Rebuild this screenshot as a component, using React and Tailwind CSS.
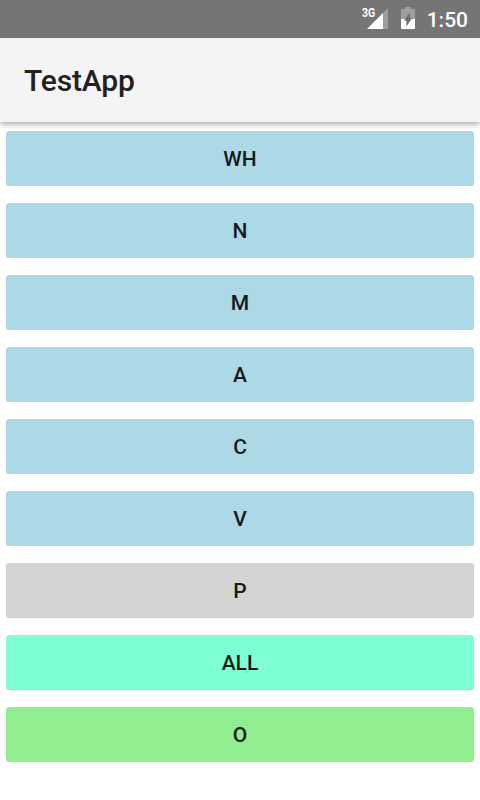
const buttons = [
  { label: "WH", color: "bg-[#add8e6]" },
  { label: "N", color: "bg-[#add8e6]" },
  { label: "M", color: "bg-[#add8e6]" },
  { label: "A", color: "bg-[#add8e6]" },
  { label: "C", color: "bg-[#add8e6]" },
  { label: "V", color: "bg-[#add8e6]" },
  { label: "P", color: "bg-[#d3d3d3]" },
  { label: "ALL", color: "bg-[#7fffd4]" },
  { label: "O", color: "bg-[#90ee90]" },
];

function SignalIcon() {
  return (
    <svg className="h-[22px] w-[28px]" viewBox="0 0 28 22" aria-hidden="true">
      <path d="M27 1V22H6Z" fill="#fff" fillOpacity="0.3" />
      <path d="M22 6V22H6Z" fill="#fff" />
    </svg>
  );
}

function BatteryIcon() {
  return (
    <svg className="h-[22px] w-[14px]" viewBox="0 0 14 22" aria-hidden="true">
      <path d="M4 0H10V2H13Q14 2 14 3V12H0V3Q0 2 1 2H4Z" fill="#fff" fillOpacity="0.3" />
      <path d="M0 12H14V21Q14 22 13 22H1Q0 22 0 21Z" fill="#fff" />
      <path d="M8.8 5.5V10.8H11.2L5.4 19.5V13.8H3Z" fill="#6c6c6c" />
    </svg>
  );
}

function StatusBar() {
  return (
    <div className="relative z-10 flex h-[38px] items-start justify-end bg-[#757575] pr-3 text-white">
      <div className="relative mt-[7px] flex">
        <SignalIcon />
        <span className="absolute left-px top-0 origin-left scale-x-[0.88] text-[12px] font-bold leading-[13px]">3G</span>
      </div>
      <div className="ml-[12px] mt-[7px]">
        <BatteryIcon />
      </div>
      <span className="ml-[12px] mt-[7px] text-[21px] font-medium leading-[26px]">1:50</span>
    </div>
  );
}

export default function App() {
  return (
    <div className="flex h-[800px] w-[480px] flex-col overflow-hidden bg-white font-['Roboto',sans-serif]">
      <StatusBar />
      <header className="flex h-[84px] items-center bg-[#f4f4f4] px-6 pt-0.5 shadow-[0_2px_6px_rgba(0,0,0,0.34)]">
        <h1 className="text-[30px] font-medium leading-9 tracking-[-0.15px] text-[#212121]">TestApp</h1>
      </header>
      <main className="flex flex-col gap-[18px] px-1.5 pt-[9px]">
        {buttons.map(({ label, color }) => (
          <button
            key={label}
            className={`h-[54px] rounded-[3px] pt-0.5 text-[21px] font-medium leading-6 text-[#141a1c] shadow-[0_1px_1px_rgba(0,0,0,0.22)] ${color}`}
          >
            {label}
          </button>
        ))}
      </main>
    </div>
  );
}
